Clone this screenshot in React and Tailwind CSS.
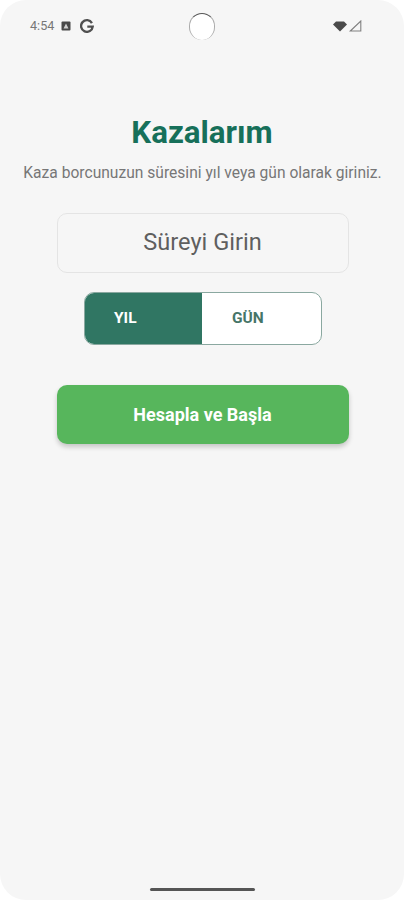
export default function App() {
  return (
    <div className="w-[404px] h-[900px] bg-white" style={{ fontFamily: "Roboto, sans-serif" }}>
      <div className="relative w-full h-full rounded-[26px] bg-[#f6f6f6] flex flex-col items-center overflow-hidden">
        <div className="w-full h-[52px] shrink-0 flex items-center justify-between pl-[30px] pr-[42px] relative">
          <div className="flex items-center text-[#555]">
            <span className="text-[12.6px] leading-none text-[#777]">4:54</span>
            <svg className="ml-[7px]" width="10" height="10" viewBox="0 0 10 10">
              <rect x="0.5" y="0.5" width="9" height="9" rx="1" fill="#484848" />
              <path d="M5 2.5 L7.5 7.5 H2.5 Z" fill="#cfcfcf" />
            </svg>
            <svg className="ml-[9px]" width="14" height="14" viewBox="0 0 24 24" fill="none" stroke="#505050" strokeWidth="4">
              <path d="M20.5 7 A10 10 0 1 0 21.8 13 H12.5" />
            </svg>
          </div>
          <div className="absolute left-[189px] top-[13px] w-[26px] h-[27px] rounded-full bg-white border-t-[1.5px] border-x border-b-0 border-t-[#555] border-x-[#aaa]" />
          <div className="flex items-center gap-[2px]">
            <svg width="14" height="11" viewBox="0 0 14 11">
              <path d="M0 3.5 L3 0.5 H11 L14 3.5 L7 10.5 Z" fill="#4a4a4a" />
            </svg>
            <svg width="13" height="12" viewBox="0 0 13 12" fill="none" stroke="#808080" strokeWidth="1.1">
              <path d="M1.3 11 L11.8 1 V11 Z" />
            </svg>
          </div>
        </div>
        <h1 className="mt-[62px] text-[31.3px] leading-[38px] font-bold text-[#17705a]">Kazalarım</h1>
        <p className="mt-[11px] ml-px text-[15.6px] leading-[20px] text-[#777] whitespace-nowrap">
          Kaza borcunuzun süresini yıl veya gün olarak giriniz.
        </p>
        <div className="mt-[30px] ml-px w-[292px] h-[60px] rounded-[10px] border border-[#e4e4e4] bg-[#f6f6f6] flex items-center justify-center text-[23.6px] text-[#5f5f5f]">
          Süreyi Girin
        </div>
        <div className="mt-[19px] ml-[2px] w-[238px] h-[53px] rounded-[10px] border border-[#8aa8a0] bg-white flex overflow-hidden">
          <div className="w-[117px] bg-[#307663] flex items-center pl-[29px] text-[15.5px] font-bold text-white">YIL</div>
          <div className="flex-1 flex items-center pl-[30px] text-[15.5px] font-bold text-[#457568]">GÜN</div>
        </div>
        <button className="mt-[40px] ml-px w-[292px] h-[59px] rounded-[10px] bg-[#57b65c] shadow-[0_3px_5px_rgba(0,0,0,0.2)] text-[18px] font-bold text-white">
          Hesapla ve Başla
        </button>
        <div className="mt-auto mb-[9px] w-[105px] h-[3px] rounded-full bg-[#555]" />
      </div>
    </div>
  );
}
